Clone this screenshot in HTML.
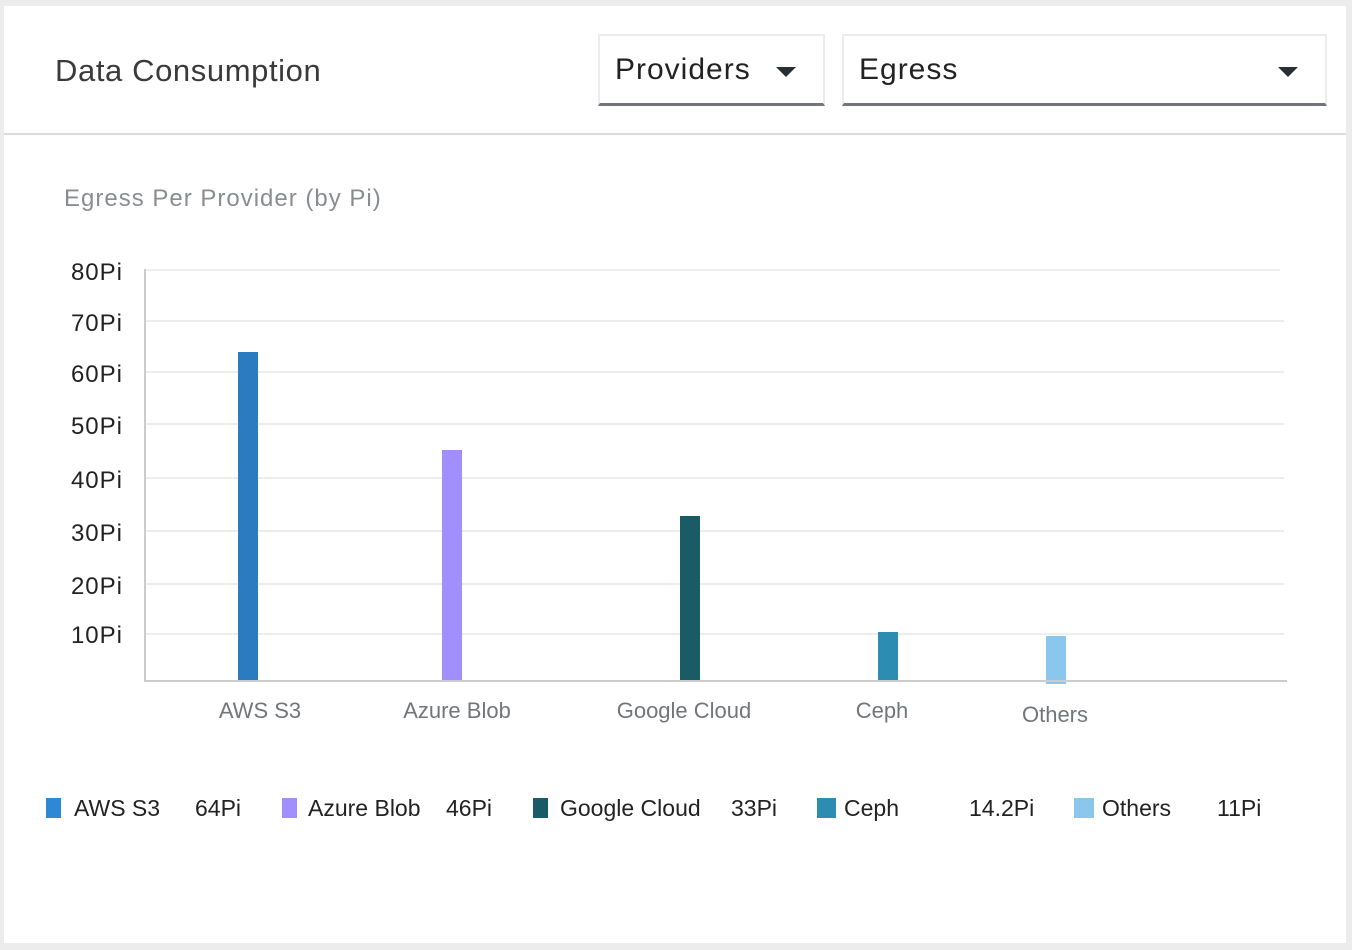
<!DOCTYPE html>
<html><head><meta charset="utf-8"><style>
html,body{margin:0;padding:0;background:#ececec;width:1352px;height:950px;overflow:hidden;font-family:"Liberation Sans",sans-serif}
.card{position:absolute;left:4px;top:6px;width:1342px;height:937px;background:#fff}
.hdr{position:absolute;left:0;top:0;width:1342px;height:127px;border-bottom:2px solid #dcdcdc}
.title{position:absolute;left:51px;top:47px;font-size:31px;color:#3a3a3a;letter-spacing:0.6px}
.dd{position:absolute;top:28px;height:67px;border:2px solid #ececec;border-bottom:3px solid #72767b;box-sizing:content-box}
.dd span{position:absolute;left:15px;top:17px;font-size:30px;color:#222;letter-spacing:1px}
.tri{position:absolute;top:31px;width:0;height:0;border-left:10px solid transparent;border-right:10px solid transparent;border-top:10px solid #292e34}
</style></head><body>
<div class="card">
 <div class="hdr">
  <div class="title">Data Consumption</div>
  <div class="dd" style="left:594px;width:223px"><span>Providers</span><div class="tri" style="left:176px"></div></div>
  <div class="dd" style="left:838px;width:481px"><span>Egress</span><div class="tri" style="left:434px"></div></div>
 </div>
</div>
<svg width="1352" height="950" style="position:absolute;left:0;top:0" font-family="Liberation Sans, sans-serif">
 <text x="64" y="206" font-size="24" fill="#8a8d90" letter-spacing="1">Egress Per Provider (by Pi)</text>
 <g stroke="#ededed" stroke-width="2">
  <line x1="146" y1="270" x2="1280" y2="270"/><line x1="146" y1="321" x2="1284" y2="321"/>
  <line x1="146" y1="372" x2="1284" y2="372"/><line x1="146" y1="424" x2="1284" y2="424"/>
  <line x1="146" y1="478" x2="1284" y2="478"/><line x1="146" y1="531" x2="1284" y2="531"/>
  <line x1="146" y1="584" x2="1284" y2="584"/><line x1="146" y1="634" x2="1284" y2="634"/>
 </g>
 <g font-size="24" fill="#222" text-anchor="end" letter-spacing="1">
  <text x="123" y="280">80Pi</text><text x="123" y="331">70Pi</text><text x="123" y="382">60Pi</text>
  <text x="123" y="434">50Pi</text><text x="123" y="488">40Pi</text><text x="123" y="541">30Pi</text>
  <text x="123" y="594">20Pi</text><text x="123" y="643">10Pi</text>
 </g>
 <rect x="238" y="352" width="20" height="329" fill="#2b7bc0"/>
 <rect x="442" y="450" width="20" height="231" fill="#a18fff"/>
 <rect x="680" y="516" width="20" height="165" fill="#1a5c65"/>
 <rect x="878" y="632" width="20" height="49" fill="#2c8cb2"/>
 <rect x="1046" y="636" width="20" height="48" fill="#8bc6ec"/>
 <line x1="145" y1="269" x2="145" y2="682" stroke="#ccc" stroke-width="2"/>
 <line x1="144" y1="681" x2="1287" y2="681" stroke="#ccc" stroke-width="2"/>
 <g font-size="22" fill="#72767b" text-anchor="middle">
  <text x="260" y="718">AWS S3</text><text x="457" y="718">Azure Blob</text>
  <text x="684" y="718">Google Cloud</text><text x="882" y="718">Ceph</text><text x="1055" y="722">Others</text>
 </g>
 <g font-size="23" fill="#222">
  <rect x="46" y="798" width="15" height="20" fill="#2f88d6"/><text x="74" y="816">AWS S3</text><text x="195" y="816">64Pi</text>
  <rect x="282" y="798" width="15" height="20" fill="#a18fff"/><text x="308" y="816">Azure Blob</text><text x="446" y="816">46Pi</text>
  <rect x="533" y="798" width="15" height="20" fill="#1a5c65"/><text x="560" y="816">Google Cloud</text><text x="731" y="816">33Pi</text>
  <rect x="817" y="798" width="19" height="20" fill="#2c8cb2"/><text x="844" y="816">Ceph</text><text x="969" y="816">14.2Pi</text>
  <rect x="1074" y="798" width="20" height="20" fill="#8bc6ec"/><text x="1102" y="816">Others</text><text x="1217" y="816">11Pi</text>
 </g>
</svg>
</body></html>
